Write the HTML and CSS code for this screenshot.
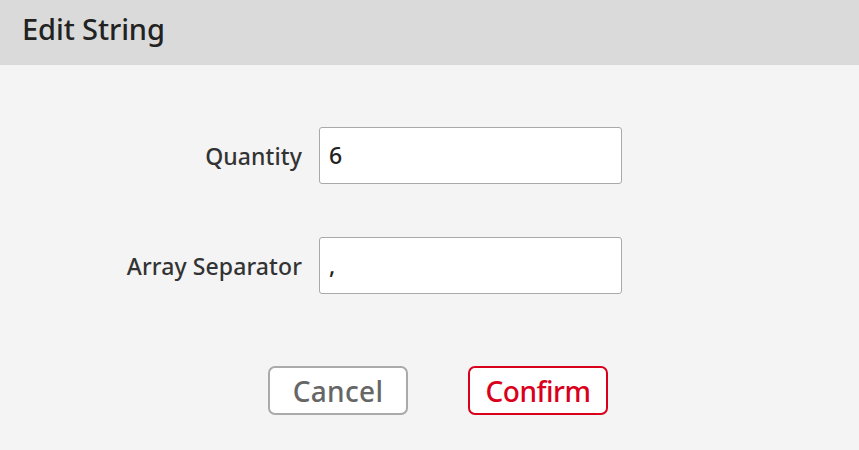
FILE: index.html
```html
<!DOCTYPE html>
<html>
<head>
<meta charset="utf-8">
<link rel="stylesheet" href="styles.css">
</head>
<body>
<div class="dialog">
  <div class="header"><h1 class="title">Edit String</h1></div>
  <div class="content">
    <div class="form">
      <div class="row">
        <label class="label">Quantity</label>
        <div class="input">6</div>
      </div>
      <div class="row">
        <label class="label">Array Separator</label>
        <div class="input">,</div>
      </div>
    </div>
    <div class="actions">
      <button class="btn btn-cancel">Cancel</button>
      <button class="btn btn-confirm">Confirm</button>
    </div>
  </div>
</div>
</body>
</html>
```
FILE: styles.css
```css
html, body {
  margin: 0;
  padding: 0;
  background: #f4f4f4;
  font-family: "Noto Sans", "Open Sans", sans-serif;
}
.dialog {
  width: 859px;
  height: 450px;
  display: flex;
  flex-direction: column;
  background: #f4f4f4;
}
.header {
  height: 65px;
  background: #dadada;
  display: flex;
  align-items: center;
  padding-left: 22px;
  box-sizing: border-box;
}
.title {
  margin: 0;
  font-size: 29px;
  font-weight: 500;
  color: #222;
  letter-spacing: -0.1px;
  padding-bottom: 8px;
}
.content {
  display: flex;
  flex-direction: column;
}
.form {
  padding-top: 62px;
  display: flex;
  flex-direction: column;
  gap: 53px;
}
.row {
  display: flex;
  align-items: center;
}
.label {
  width: 319px;
  text-align: right;
  font-size: 23px;
  font-weight: 500;
  color: #333;
  padding-right: 17px;
  box-sizing: border-box;
  letter-spacing: 0.1px;
}
.input {
  width: 303px;
  height: 57px;
  box-sizing: border-box;
  border: 1px solid #a9a9a9;
  border-radius: 3px;
  background: #fff;
  padding-left: 9px;
  padding-bottom: 1px;
  font-size: 23px;
  font-weight: 500;
  color: #222;
  display: flex;
  align-items: center;
}
.actions {
  margin-top: 72px;
  display: flex;
  justify-content: flex-start;
  padding-left: 268px;
  gap: 60px;
}
.btn {
  width: 140px;
  height: 49px;
  box-sizing: border-box;
  background: #fff;
  border-radius: 7px;
  font-family: inherit;
  font-size: 28px;
  font-weight: 500;
  padding: 0;
}
.btn-cancel {
  border: 2px solid #aaaaaa;
  color: #666;
  letter-spacing: 0.3px;
}
.btn-confirm {
  border: 2px solid #d9001b;
  color: #d9001b;
  letter-spacing: -0.5px;
}
```
